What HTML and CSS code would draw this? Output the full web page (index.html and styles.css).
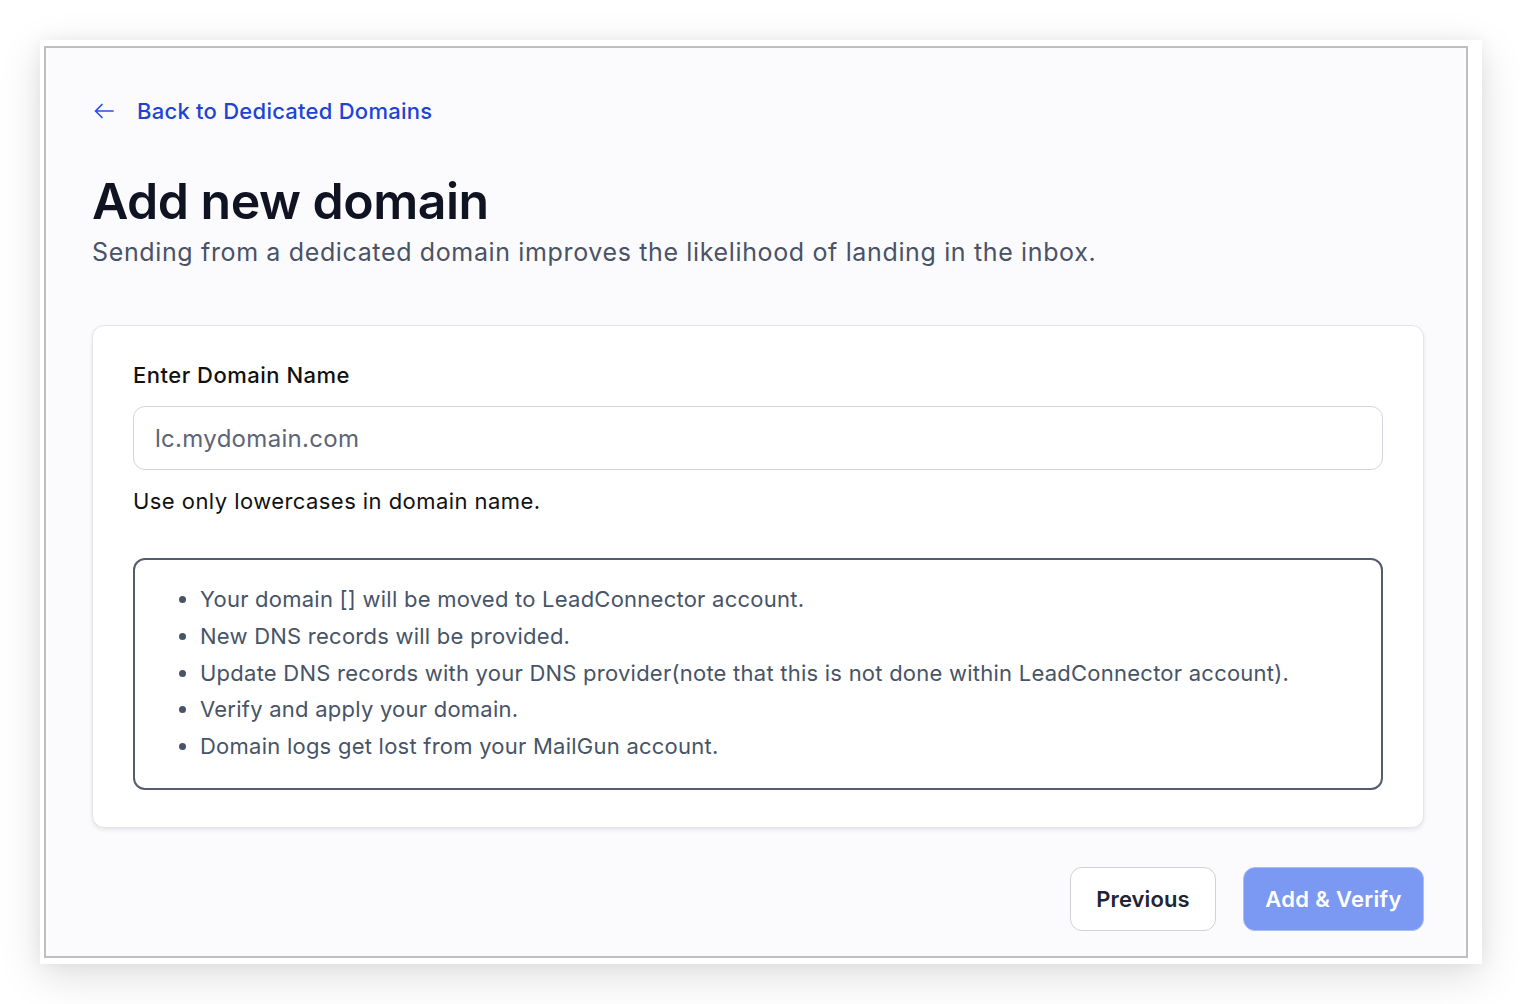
FILE: index.html
```html
<!DOCTYPE html>
<html lang="en">
<head>
<meta charset="utf-8">
<title>Add new domain</title>
<link rel="stylesheet" href="styles.css">
</head>
<body>
<div class="frame">
  <div class="screen">
    <a class="back" href="#">
      <svg class="back-icon" width="20" height="16" viewBox="0 0 20 16" fill="none" stroke="currentColor" stroke-width="1.7" stroke-linecap="round" stroke-linejoin="round"><path d="M19 8H1.5M8 1.5L1.5 8L8 14.5"/></svg>
      <span>Back to Dedicated Domains</span>
    </a>
    <h1 class="title">Add new domain</h1>
    <p class="subtitle">Sending from a dedicated domain improves the likelihood of landing in the inbox.</p>

    <div class="card">
      <label class="label" for="domain">Enter Domain Name</label>
      <input class="input" id="domain" type="text" placeholder="lc.mydomain.com">
      <p class="help">Use only lowercases in domain name.</p>
      <div class="info">
        <ul class="info-list">
          <li>Your domain [] will be moved to LeadConnector account.</li>
          <li>New DNS records will be provided.</li>
          <li>Update DNS records with your DNS provider(note that this is not done within LeadConnector account).</li>
          <li>Verify and apply your domain.</li>
          <li>Domain logs get lost from your MailGun account.</li>
        </ul>
      </div>
    </div>

    <div class="actions">
      <button class="btn btn-secondary" type="button">Previous</button>
      <button class="btn btn-primary" type="button">Add &amp; Verify</button>
    </div>
  </div>
</div>
</body>
</html>
```
FILE: styles.css
```css
* { box-sizing: border-box; }
html, body { margin: 0; padding: 0; }
body {
  background: #ffffff;
  font-family: Inter, "Noto Sans", "Liberation Sans", sans-serif;
  width: 1522px;
  height: 1004px;
  overflow: hidden;
}
.frame {
  margin: 40px 0 0 40px;
  width: 1442px;
  height: 924px;
  background: #ffffff;
  padding: 6px 14px 6px 4px;
  box-shadow: 0 12px 40px rgba(0, 0, 0, 0.13), 0 0 16px rgba(0, 0, 0, 0.05);
}
.screen {
  height: 100%;
  border: 2px solid #bfbfbf;
  background: #fbfbfd;
  padding: 49px 42px 0 46px;
  display: flex;
  flex-direction: column;
}
.back {
  display: flex;
  align-items: center;
  gap: 23px;
  color: #1f44d4;
  text-decoration: none;
  font-size: 22px;
  line-height: 28px;
  font-weight: 500;
  letter-spacing: 0.25px;
  padding-left: 2px;
}
.back-icon { display: block; color: #2a4fdc; }
.title {
  margin: 48px 0 0 0;
  font-size: 50px;
  line-height: 56px;
  font-weight: 600;
  color: #101322;
  letter-spacing: -0.5px;
}
.subtitle {
  margin: 7px 0 0 0;
  font-size: 25px;
  line-height: 32px;
  color: #4a5266;
  letter-spacing: 0.64px;
}
.card {
  margin-top: 57px;
  background: #ffffff;
  border: 1px solid #e2e4ea;
  border-radius: 12px;
  box-shadow: 0 2px 4px rgba(16, 24, 40, 0.09);
  padding: 35px 40px 37px 40px;
  display: flex;
  flex-direction: column;
}
.label {
  font-size: 22px;
  line-height: 28px;
  font-weight: 500;
  color: #111111;
  letter-spacing: 0.5px;
}
.input {
  margin-top: 17px;
  height: 64px;
  width: 100%;
  border: 1px solid #d2d5dd;
  border-radius: 12px;
  background: #ffffff;
  padding: 0 21px;
  font-family: inherit;
  font-size: 24px;
  letter-spacing: 0.3px;
  color: #1f2937;
  outline: none;
}
.input::placeholder { color: #5d6577; }
.help {
  margin: 17px 0 0 0;
  font-size: 22px;
  line-height: 28px;
  color: #111111;
  letter-spacing: 0.44px;
}
.info {
  margin-top: 43px;
  border: 2px solid #555d6d;
  border-radius: 12px;
  padding: 21px 20px 23px 0;
}
.info-list {
  margin: 0;
  padding-left: 65px;
  font-size: 22px;
  line-height: 36.75px;
  color: #475467;
  letter-spacing: 0.24px;
}
.actions {
  margin-top: 39px;
  display: flex;
  justify-content: flex-end;
  gap: 27px;
}
.btn {
  height: 64px;
  border-radius: 12px;
  font-family: inherit;
  font-size: 22px;
  font-weight: 600;
  padding: 0;
  cursor: pointer;
}
.btn-secondary {
  width: 146px;
  background: #ffffff;
  border: 1px solid #cfd2d9;
  color: #1f2533;
  letter-spacing: 0.1px;
}
.btn-primary {
  width: 181px;
  background: #7b99f2;
  border: 1px solid #a9bdf7;
  color: #ffffff;
  letter-spacing: 0.3px;
}
```
